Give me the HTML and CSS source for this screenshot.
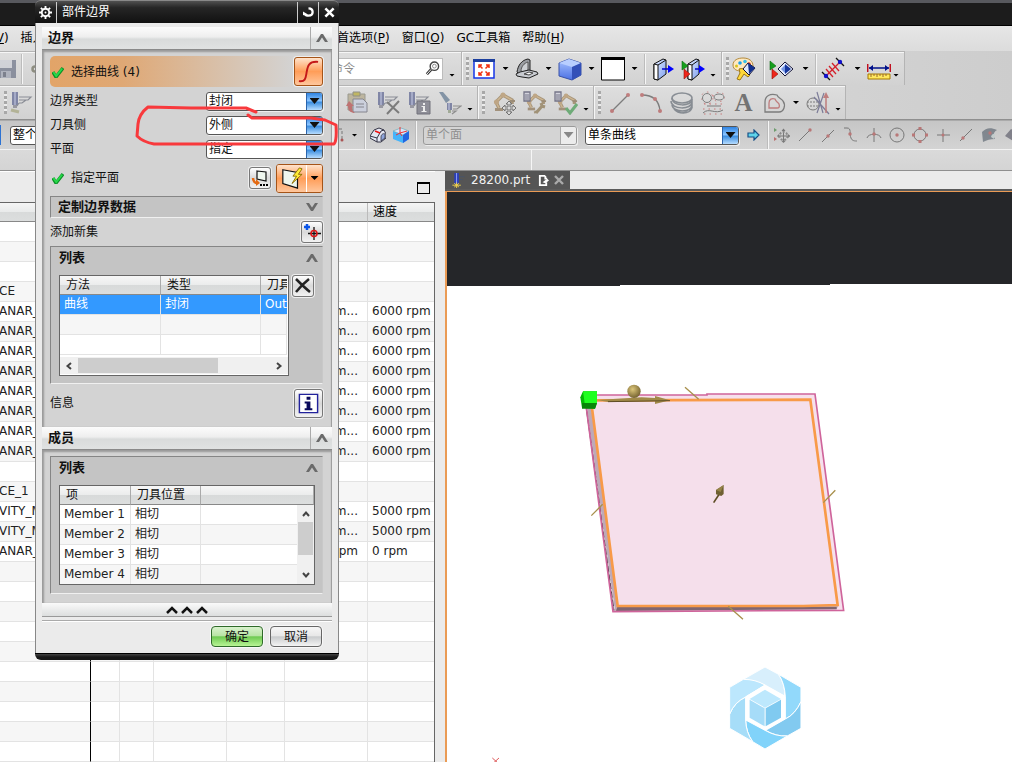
FILE: index.html
```html
<!DOCTYPE html>
<html lang="zh-CN">
<head>
<meta charset="utf-8">
<title>28200.prt</title>
<link rel="stylesheet" href="styles.css">
</head>
<body>
<svg class="defs" aria-hidden="true">
  <defs>
    <radialGradient id="gBall" cx=".4" cy=".35" r=".7"><stop offset="0" stop-color="#dcc67a"/><stop offset="1" stop-color="#6f5d2c"/></radialGradient>
    <linearGradient id="gPane" x1="0" x2="1" y1="0" y2="1"><stop offset="0" stop-color="#e6eeff"/><stop offset="1" stop-color="#7d9ff0"/></linearGradient>
    <linearGradient id="gCube" x1="0" x2="0" y1="0" y2="1"><stop offset="0" stop-color="#a9c4ff"/><stop offset="1" stop-color="#4b70e4"/></linearGradient>
    <symbol id="check" viewBox="0 0 12 12"><path d="M1 6l3 5 7-9" fill="none" stroke="#0a8f26" stroke-width="3.4"/><path d="M1.400 6l2.800 4 6-7.500" fill="none" stroke="#27d84a" stroke-width="2"/></symbol>
    <symbol id="up" viewBox="0 0 12 10"><path d="M0 9L5 1h2l5 8H9L6 4.500 3 9z" fill="#6a6a6a"/></symbol>
    <symbol id="down" viewBox="0 0 12 10"><path d="M0 1l5 8h2l5-8H9L6 5.500 3 1z" fill="#6a6a6a"/></symbol>
    <symbol id="tool" viewBox="0 0 24 24"><path d="M2 1h6v13H2z" fill="#38427c"/><path d="M4 1h2v13H4z" fill="#7a84b8"/><path d="M3 14h4v3H3z" fill="#667"/><path d="M9 6h12l-3 3H9M9 9h7l-4 3H9M9 12l-2 3" fill="none" stroke="#4b5060" stroke-width="1.200"/></symbol>
    <symbol id="robot" viewBox="0 0 24 24"><path d="M3 20h8v-3H3z" fill="#7a5b33"/><path d="M7 17L4 11l7-7 9 5v4" fill="none" stroke="#80602f" stroke-width="3.500"/><path d="M7 17L4 11l7-7 9 5" fill="none" stroke="#c59a59" stroke-width="1.500"/><circle cx="4.500" cy="11" r="2.500" fill="#a97d42"/><circle cx="11" cy="4" r="2.500" fill="#a97d42"/><path d="M18 9h5v2h-5z" fill="#6b4f28"/></symbol>
    <symbol id="sheet" viewBox="0 0 24 24"><path d="M1 1h6v9H1z" fill="#ccd" stroke="#224" stroke-width="1.300"/><path d="M2 4h4M2 6h4M2 8h4" stroke="#224"/></symbol>
    <symbol id="tri" viewBox="0 0 24 24"><path d="M1 4l6 5-6 4z" fill="#16a01c" stroke="#0b6a10" stroke-width=".6"/><path d="M3 12l6 5-6 5z" fill="#f0261a" stroke="#8d120c" stroke-width=".6"/></symbol>
  </defs>
</svg>

<div class="app">
  <header class="titlebar"></header>

  <nav class="menubar">
    <div class="menu-left"><a href="#">(<u>V</u>)</a><a href="#">插入</a></div>
    <a href="#">首选项(<u>P</u>)</a><a href="#">窗口(<u>O</u>)</a><a href="#">GC工具箱</a><a href="#">帮助(<u>H</u>)</a>
  </nav>

  <div class="tools">
    <div class="bar">
      <div class="group">
        <div class="lead lead-a">
          <button class="ic dim" aria-label="保存"><svg viewBox="0 0 24 24"><path d="M2 3h20v18H4l-2-2z" fill="#4d5670"/><path d="M6 3h12v8H6z" fill="#c9ccd6"/><path d="M7 14h10v7H7z" fill="#8f96aa"/><path d="M9 15h3v5H9z" fill="#343b52"/></svg></button>
          <i class="sep"></i>
          <svg class="ic-dot" viewBox="0 0 12 12"><circle cx="7" cy="6" r="2.500" fill="none" stroke="#8d8d80" stroke-width="2.500"/></svg>
        </div>
        <label class="search"><input type="text" placeholder="查找命令" aria-label="查找命令"><svg viewBox="0 0 16 16"><circle cx="10" cy="5.500" r="4.500" fill="#fff" stroke="#444" stroke-width="1.500"/><circle cx="10" cy="5.500" r="2" fill="none" stroke="#888"/><path d="M6.500 9L2 14" stroke="#333" stroke-width="3"/><path d="M6.500 9L2 14" stroke="#fff"/></svg></label>
        <i class="car low wide"></i>
      </div>
      <div class="group">
        <i class="grip"></i>
        <button class="ic" aria-label="适合窗口"><svg viewBox="0 0 24 24"><path d="M2 3h20v18H2z" fill="#fff" stroke="#1636e8" stroke-width="1.500"/><path d="M1 2h22v3H1z" fill="#1c3f9e"/><path d="M7 11V8h3M14 8h3v3M17 15v3h-3M10 18H7v-3M7 8l3.500 3.500M17 8l-3.500 3.500M17 18l-3.500-3.500M7 18l3.500-3.500" stroke="#f03010" stroke-width="1.500" fill="none"/></svg></button><i class="car mid"></i>
        <button class="ic" aria-label="视图方位"><svg viewBox="0 0 24 24"><path d="M2 15C3 8 7 3 13 2l2 1v11L5 18z" fill="#9a9da2" stroke="#222"/><path d="M6 14c0-4 3-8 7-9v8l-5 2z" fill="#cdd0d4" stroke="#555"/><path d="M1 17l4-2 9-2 8 2 1 2-9 4-7-1-5-1z" fill="#c8cbd0" stroke="#222"/><path d="M9 17l5-2 4 1-4 2z" fill="#fff" stroke="#444"/></svg></button><i class="car mid"></i>
        <button class="ic" aria-label="着色"><svg viewBox="0 0 24 24"><path d="M1 6l10-4 12 4v12l-9 5L1 19z" fill="url(#gCube)" stroke="#3a53a8"/><path d="M1 6l10-4 12 4-9 4z" fill="#b8ceff"/><path d="M14 10l9-4v12l-9 5z" fill="#3350b8"/></svg></button><i class="car mid"></i>
        <button class="ic" aria-label="背景"><svg viewBox="0 0 24 24"><path d="M.5 1h23v22H.5z" fill="#fff" stroke="#000"/><path d="M0 0h24v3H0z"/></svg></button><i class="car mid"></i>
        <i class="sep"></i>
        <button class="ic w31" aria-label="剖切"><svg viewBox="0 0 24 24"><path d="M4 7l9-5 3 1v14l-8 6-4-1z" fill="url(#gPane)" stroke="#111"/><path d="M4 7l4 1v15l-4-1z" fill="#fff" stroke="#111"/><path d="M8 8l8-5" stroke="#111"/><path d="M12 12h7" stroke="#00c" stroke-width="1.500"/><path d="M18 8l6 4-6 4z" fill="#00f"/></svg></button>
        <button class="ic w31" aria-label="编辑截面"><svg viewBox="0 0 24 24"><path d="M7 7l8-5 3 1v14l-7 6-4-1z" fill="url(#gPane)" stroke="#111"/><path d="M7 7l4 1v15l-4-1z" fill="#fff" stroke="#111"/><path d="M11 8l7-5" stroke="#111"/><path d="M14 12h5" stroke="#00c" stroke-width="1.500"/><path d="M18 8l6 4-6 4z" fill="#00f"/><use href="#tri"/></svg></button>
        <i class="car low"></i>
      </div>
      <div class="group">
        <i class="grip"></i>
        <button class="ic" aria-label="对象显示"><svg viewBox="0 0 24 24"><path d="M1 8c0-5 5-7 10-7 6 0 10 3 10 8 0 3-4 3-6 3s-3 2-6 2-8-1-8-6z" fill="#ffe9c0" stroke="#b38a3c"/><circle cx="8" cy="6" r="1.800" fill="#19a0ea"/><circle cx="13" cy="4.500" r="1.800" fill="#3bc0e7"/><circle cx="17" cy="7" r="1.800" fill="#ea3014"/><circle cx="4.500" cy="9" r="1.500" fill="#d9c31a"/><path d="M7 12c3-1 5 0 7 1l4 5-2 2-4-3-4 6-3-1 3-6z" fill="#ffd83a" stroke="#9c7612"/><path d="M11 12l5-6 7 5-6 7z" fill="#dfe8ff" stroke="#113"/><path d="M16 6l7 5-6 6z" fill="#12308f"/></svg></button>
        <i class="sep gap"></i>
        <button class="ic w31" aria-label="显示隐藏"><svg viewBox="0 0 24 24"><use href="#tri"/><path d="M9 12l7-7 8 7-8 7z" fill="#e7eeff" stroke="#113"/><path d="M16 7l6 5-6 5z" fill="#16369c"/><path d="M12 12l4-4v8z" fill="#7396e6"/></svg></button><i class="car mid"></i>
        <i class="sep"></i>
        <button class="ic w31" aria-label="测量"><svg viewBox="0 0 24 24"><path d="M1 15l8 8M15 1l8 8" stroke="#111" stroke-width="1.300"/><path d="M5 19L19 5M5 12l7 8M8 9l7 8M11 6l7 8" stroke="#d3202b" stroke-width="1.300"/><circle cx="5" cy="19" r="2.200" fill="#11c"/><circle cx="19" cy="5" r="2.200" fill="#11c"/></svg></button><i class="car mid"></i>
        <button class="ic" aria-label="测量距离"><svg viewBox="0 0 24 24"><path d="M.7 7v8M23.300 7v8" stroke="#c01020" stroke-width="1.500"/><path d="M2 11h20" stroke="#00108a" stroke-width="1.500"/><path d="M6 8l-4 3 4 3zM18 8l4 3-4 3z" fill="#00108a"/><path d="M1 17h22v5H1z" fill="#ffe85e" stroke="#a57900"/><path d="M4 17v3M7 17v2M10 17v3M13 17v2M16 17v3M19 17v2" stroke="#963"/></svg></button>
        <i class="car low"></i>
      </div>
    </div>

    <div class="bar">
      <div class="group">
        <div class="lead lead-b"><i class="grip"></i><button class="ic dim" aria-label="刀具"><svg viewBox="0 0 24 24"><use href="#tool"/><path d="M1 19l8 2" stroke="#996" stroke-width="3"/></svg></button></div>
        <button class="ic w31 dim" aria-label="粘贴"><svg viewBox="0 0 24 24"><path d="M3 3h17v16H3z" fill="#a6986f" stroke="#665"/><path d="M8 1h7v4H8z" fill="#a90" stroke="#554"/><path d="M8 8h10l4 4v9H8z" fill="#c3cbe2" stroke="#445"/><path d="M11 13h8M11 16h8" stroke="#445"/><path d="M4 10L1 15h2c0 5 3 7 7 7-3-2-3-4-3-7h2z" fill="#a22"/></svg></button>
        <button class="ic w31 dim" aria-label="删除"><svg viewBox="0 0 24 24"><use href="#tool"/><path d="M11 11l12 11M23 10L11 23" stroke="#333" stroke-width="2"/></svg></button>
        <button class="ic w31 dim" aria-label="信息"><svg viewBox="0 0 24 24"><use href="#tool"/><path d="M10 10h13v13H10z" fill="#556" stroke="#223"/><path d="M16 12h2v2h-2zM14.500 15H18v5h1.500v1h-5v-1H16v-4h-1.500z" fill="#fff"/></svg></button>
        <button class="ic w31 dim" aria-label="刀轨"><svg viewBox="0 0 24 24"><path d="M1 1h4l7 8-4 3-5-8z" fill="#3c5a7a"/><path d="M9 12h5v7H9z" fill="#38427c"/><path d="M10 12h2v7h-2z" fill="#7a84b8"/><path d="M10 19h3v3h-3z" fill="#786"/><path d="M15 15h8l-4 3h-4M14 20h4l-4 3" fill="none" stroke="#555" stroke-width="1.200"/></svg></button>
        <i class="car low"></i>
      </div>
      <div class="group">
        <i class="grip"></i>
        <button class="ic w31 dim" aria-label="移动机床"><svg viewBox="0 0 24 24"><use href="#robot"/><path d="M17 10l3 3h-2v3h3v-2l3 3-3 3v-2h-3v3h2l-3 3-3-3h2v-3h-3v2l-3-3 3-3v2h3v-3h-2z" fill="#ddd" stroke="#222"/></svg></button>
        <button class="ic w31 dim" aria-label="机床工具"><svg viewBox="0 0 24 24"><g transform="translate(2 1)"><use href="#robot" width="22" height="22"/></g><use href="#sheet"/><path d="M13 22l7-8M18 12l1 3 3 1M13 22l-1-2" fill="none" stroke="#765c2c" stroke-width="3"/></svg></button>
        <button class="ic w31 dim" aria-label="机床检查"><svg viewBox="0 0 24 24"><g transform="translate(2 1)"><use href="#robot" width="22" height="22"/></g><use href="#sheet"/><path d="M12 17l4 5 7-9" fill="none" stroke="#1b8a2d" stroke-width="3"/></svg></button>
        <i class="car low"></i>
      </div>
      <div class="group">
        <i class="grip"></i>
        <button class="ic w31 dim" aria-label="直线"><svg viewBox="0 0 24 24"><path d="M4 20L20 4" stroke="#333" stroke-width="1.300"/><circle cx="4" cy="20" r="2" fill="#a33"/><circle cx="20" cy="4" r="2" fill="#a33"/></svg></button>
        <button class="ic w31 dim" aria-label="圆弧"><svg viewBox="0 0 24 24"><path d="M3 4c10 0 17 5 18 16" fill="none" stroke="#333" stroke-width="1.300"/><circle cx="3" cy="4" r="2" fill="#a33"/><circle cx="16" cy="8" r="2" fill="#a33"/><circle cx="21" cy="20" r="2" fill="#a33"/></svg></button>
        <button class="ic w31 dim" aria-label="螺旋线"><svg viewBox="0 0 24 24"><g fill="none" stroke="#46505c" stroke-width="1.500"><ellipse cx="12" cy="7" rx="10" ry="5"/><path d="M2 7c0 9 20 9 20 1M1 10c0 9 21 9 21 1M2 14c1 8 20 8 20 0M4 18c4 5 15 6 18-1M22 8v9M12 22l6-1"/></g></svg></button>
        <button class="ic w31 dim" aria-label="曲线集"><svg viewBox="0 0 24 24"><g fill="none" stroke="#333"><circle cx="6" cy="7" r="4.500"/><ellipse cx="18" cy="6" rx="5" ry="3"/><path d="M6 15h14M2 22c6-6 12 2 20-3"/></g><g fill="none" stroke="#b33" stroke-dasharray="1.500 4"><circle cx="6" cy="7" r="6"/><ellipse cx="18" cy="6" rx="6" ry="4.500"/><path d="M3 13h20M2 18h20M3 23h20"/></g></svg></button>
        <button class="ic w31 dim letter" aria-label="文本">A</button>
        <button class="ic w31 dim" aria-label="偏置"><svg viewBox="0 0 24 24"><path d="M2 21V11c0-6 5-9 12-7 1 3 4 3 6 6 3 4 1 11-4 11z" fill="none" stroke="#333" stroke-width="1.300"/><path d="M6 17v-5c0-4 3-5 6-4 1 3 3 3 4 5 1 3 0 4-2 4z" fill="none" stroke="#a33" stroke-width="1.300"/></svg></button><i class="car thin"></i>
        <button class="ic w31 dim" aria-label="相交"><svg viewBox="0 0 24 24"><circle cx="7" cy="13" r="6" fill="none" stroke="#333"/><path d="M1 11h12M1 15h12" stroke="#333" stroke-dasharray="2 1"/><path d="M11 1l6 21M18 2l-7 20M8 6l15 17" stroke="#336" stroke-width="1.200"/><path d="M20 22V6" stroke="#a33" stroke-width="1.500"/><path d="M17 7l3-6 3 6z" fill="#a33"/></svg></button>
        <i class="car low"></i>
      </div>
    </div>
  </div>

  <div class="selbar">
    <div class="lead lead-c">
      <i class="stub"></i>
      <span class="combo scope"><select aria-label="选择范围"><option>整个装配</option></select></span>
      <svg class="marquee" viewBox="0 0 12 16"><path d="M1 2h8v10M1 12h3" fill="none" stroke="#777" stroke-dasharray="3 2"/><circle cx="9" cy="13" r="1.500" fill="#a55"/></svg>
    </div>
    <i class="car mid"></i><i class="sep"></i>
    <button class="ic s23" aria-label="面选择"><svg viewBox="0 0 16 16"><path d="M0 9l4-6 5-2 5 2 2 4v4l-5 4H7l-7-4z" fill="#e4e7f2" stroke="#334"/><path d="M0 9l7 2 4-7 3-1M7 11v4" fill="none" stroke="#334"/><path d="M11 14v-4c0-3 3-4 4-3v4z" fill="#8fa6dc" stroke="#334" stroke-width=".8"/><path d="M5 4l5 2" stroke="#e11" stroke-width="1.600"/></svg></button>
    <button class="ic s23" aria-label="体选择"><svg viewBox="0 0 16 16"><path d="M0 4l8-3 8 3v8l-6 4-10-4z" fill="#45b4fb"/><path d="M0 4l8-3 8 3-6 4z" fill="#d8e6fa" stroke="#7aa" stroke-width=".6"/><path d="M10 8l6-4v8l-6 4z" fill="#2465e0"/><path d="M7 0v6l-4 2M7 6l7-2M7 6l2 3" stroke="#e33" fill="none"/></svg></button>
    <i class="sep near"></i>
    <span class="combo off"><select disabled aria-label="面规则"><option>单个面</option></select><b></b></span>
    <span class="combo"><select aria-label="曲线规则"><option>单条曲线</option></select><b></b></span>
    <button class="ic next" aria-label="下一个"><svg class="small" viewBox="0 0 14 12"><path d="M1 4h6V1l5 5-5 5V8H1z" fill="#5fd4ea" stroke="#174f86" stroke-width="1.200"/></svg></button>
    <i class="sep"></i>
    <div class="snaps">
      <button class="ic s23 dim" aria-label="启用捕捉"><svg viewBox="0 0 16 16"><path d="M0 1l3 2-3 2z" fill="#272"/><path d="M0 10l3 2-3 2z" fill="#a22"/><path d="M9.500 3v12M4 9h12" stroke="#333"/><path d="M7.500 4l2-2.500 2 2.500zM7.500 14l2 2 2-2zM14 7l2 2-2 2zM5 7L3 9l2 2z" fill="#333"/><circle cx="9.500" cy="9" r="4" fill="none" stroke="#555" stroke-width="2" stroke-dasharray="2 1.500"/></svg></button>
      <button class="ic s23 dim" aria-label="终点"><svg viewBox="0 0 16 16"><path d="M2 14L13 3" stroke="#333"/><circle cx="13" cy="3" r="1.700" fill="#a33"/></svg></button>
      <button class="ic s23 dim" aria-label="中点"><svg viewBox="0 0 16 16"><path d="M2 15L14 3" stroke="#333"/><circle cx="8" cy="9" r="1.700" fill="#a33"/></svg></button>
      <button class="ic s23 dim" aria-label="控制点"><svg viewBox="0 0 16 16"><path d="M1 1h3c5 0 2 6 4 10 1 3 4 3 6 3" fill="none" stroke="#333"/><circle cx="7" cy="7" r="1.700" fill="#a33"/></svg></button>
      <button class="ic s23 dim" aria-label="交点"><svg viewBox="0 0 16 16"><path d="M1 11c1-5 13-5 14 0M8 1v14" fill="none" stroke="#333"/><circle cx="8" cy="7" r="1.700" fill="#a33"/></svg></button>
      <button class="ic s23 dim" aria-label="圆心"><svg viewBox="0 0 16 16"><circle cx="8" cy="8" r="7" fill="none" stroke="#333"/><circle cx="8" cy="8" r="1.700" fill="#a33"/></svg></button>
      <button class="ic s23 dim" aria-label="象限点"><svg viewBox="0 0 16 16"><circle cx="8" cy="8" r="6" fill="none" stroke="#333"/><path d="M8 0v3M8 13v3M0 8h3M13 8h3" stroke="#a33" stroke-width="3"/></svg></button>
      <button class="ic s23 dim" aria-label="现有点"><svg viewBox="0 0 16 16"><path d="M8 2v13M2 8h13" stroke="#333"/><circle cx="8" cy="8" r="1.500" fill="#a33"/></svg></button>
      <button class="ic s23 dim" aria-label="曲线上的点"><svg viewBox="0 0 16 16"><path d="M2 14L14 2" stroke="#333"/><circle cx="5" cy="11" r="1.700" fill="#a33"/></svg></button>
      <button class="ic s23 dim" aria-label="面上的点"><svg viewBox="0 0 16 16"><path d="M1 5c4-4 8-5 15-2-4 2-4 6-2 9-5 0-8 1-12 3z" fill="#44505e"/><path d="M10 10c0-3 4-4 4-3l-1 5z" fill="#bcc"/><circle cx="9" cy="6" r="1.700" fill="#a33"/></svg></button>
      <button class="ic s23 dim" aria-label="小平面"><svg viewBox="0 0 16 16"><path d="M1 9l6-7 8 4-4 9z" fill="#445"/></svg></button>
    </div>
  </div>
  <div class="cuebar"><span></span><span></span></div>

  <main class="work">
    <section class="nav">
      <div class="nav-top"><button class="max" aria-label="最大化"></button></div>
      <div class="nav-table">
        <table>
          <colgroup><col class="c-name"><col class="c-a"><col class="c-b"><col class="c-c"><col class="c-d"><col class="c-feed"><col class="c-speed"></colgroup>
          <thead><tr><th></th><th></th><th></th><th></th><th></th><th></th><th>速度</th></tr></thead>
          <tbody>
            <tr><td></td><td></td><td></td><td></td><td></td><td></td><td></td></tr>
            <tr><td></td><td></td><td></td><td></td><td></td><td></td><td></td></tr>
            <tr><td></td><td></td><td></td><td></td><td></td><td></td><td></td></tr>
            <tr><td>CE</td><td></td><td></td><td></td><td></td><td></td><td></td></tr>
            <tr><td>ANAR_</td><td></td><td></td><td></td><td></td><td>m...</td><td>6000 rpm</td></tr>
            <tr><td>ANAR_</td><td></td><td></td><td></td><td></td><td>m...</td><td>6000 rpm</td></tr>
            <tr><td>ANAR_</td><td></td><td></td><td></td><td></td><td>m...</td><td>6000 rpm</td></tr>
            <tr><td>ANAR_</td><td></td><td></td><td></td><td></td><td>m...</td><td>6000 rpm</td></tr>
            <tr><td>ANAR_</td><td></td><td></td><td></td><td></td><td>m...</td><td>6000 rpm</td></tr>
            <tr><td>ANAR_</td><td></td><td></td><td></td><td></td><td>m...</td><td>6000 rpm</td></tr>
            <tr><td>ANAR_</td><td></td><td></td><td></td><td></td><td>m...</td><td>6000 rpm</td></tr>
            <tr><td>ANAR_</td><td></td><td></td><td></td><td></td><td>m...</td><td>6000 rpm</td></tr>
            <tr><td></td><td></td><td></td><td></td><td></td><td></td><td></td></tr>
            <tr><td>CE_1</td><td></td><td></td><td></td><td></td><td></td><td></td></tr>
            <tr><td>VITY_M</td><td></td><td></td><td></td><td></td><td>m...</td><td>5000 rpm</td></tr>
            <tr><td>VITY_M</td><td></td><td></td><td></td><td></td><td>m...</td><td>5000 rpm</td></tr>
            <tr><td>ANAR_</td><td></td><td></td><td></td><td></td><td>pm</td><td>0 rpm</td></tr>
            <tr><td></td><td></td><td></td><td></td><td></td><td></td><td></td></tr>
            <tr><td></td><td></td><td></td><td></td><td></td><td></td><td></td></tr>
            <tr><td></td><td></td><td></td><td></td><td></td><td></td><td></td></tr>
            <tr><td></td><td></td><td></td><td></td><td></td><td></td><td></td></tr>
            <tr><td></td><td></td><td></td><td></td><td></td><td></td><td></td></tr>
            <tr><td></td><td></td><td></td><td></td><td></td><td></td><td></td></tr>
            <tr><td></td><td></td><td></td><td></td><td></td><td></td><td></td></tr>
            <tr><td></td><td></td><td></td><td></td><td></td><td></td><td></td></tr>
            <tr><td></td><td></td><td></td><td></td><td></td><td></td><td></td></tr>
            <tr><td></td><td></td><td></td><td></td><td></td><td></td><td></td></tr>
          </tbody>
        </table>
      </div>
    </section>

    <section class="stage">
      <div class="tabs">
        <div class="tab">
          <svg class="t-tool" viewBox="0 0 14 16"><path d="M3 0h5v12H3z" fill="#2c3fb8"/><path d="M5 0h1v12H5z" fill="#93a4ff"/><path d="M9 4h5M9 7h3" stroke="#48546a"/><path d="M1 13h9M5.500 10v6M3 11l5 4M8 11l-5 4" stroke="#f3d34a"/></svg>
          <span>28200.prt</span>
          <svg class="t-mod" viewBox="0 0 12 12"><path d="M8 1H2v10h7V8M8 1v3h2" fill="none" stroke="#fff" stroke-width="2"/><path d="M5 8l5-4 2 2-4 3z" fill="#fff"/></svg>
          <button class="t-x" aria-label="关闭"><svg viewBox="0 0 10 10"><path d="M1 1l8 8M9 1L1 9" stroke="#aaa" stroke-width="2.400"/></svg></button>
        </div>
      </div>
      <div class="viewport">
        <svg class="scene" role="img" aria-label="零件">
          <g transform="translate(-447 -192)">
            <path d="M447 192H3000V284H830V285H620V286H447z" fill="#252629"/>
            <g transform="translate(560 370) scale(.3333)">
              <path d="M74 75H441V72H765L851 721 159 725z" fill="#f6e0ec"/>
              <path d="M78 112L96 112 172 709 835 706 830 718 165 722z" fill="#bda9b8"/>
              <path d="M92 100L752 89 833 706 172 709z" fill="#f5dfeb"/>
              <path d="M172 711H830V718L168 723z" fill="#7f6670"/>
              <path d="M79 116L162 722" stroke="#3f323a" stroke-width="3"/>
              <path d="M80 116L163 722" stroke="#fff" stroke-width="2" stroke-dasharray="8 18"/>
              <path d="M74 75H441V72H765L851 721 159 725z" fill="none" stroke="#cf649b" stroke-width="5"/>
              <path d="M93 91L751 89 833 705 730 708H173z" fill="none" stroke="#f89a48" stroke-width="8"/>
              <path d="M375 52L416 88M826 361L790 398M94 437L128 403M505 709L549 748" stroke="#a8904c" stroke-width="4"/>
              <path d="M110 90L245 82 285 84V78L330 91 285 102V94L145 96z" fill="#a18a48"/>
              <path d="M144 95L330 92" stroke="#5e4d25" stroke-width="3"/>
              <circle cx="222" cy="64" r="20" fill="url(#gBall)"/>
              <path d="M461 398L478 372" stroke="#5e4d25" stroke-width="5"/><path d="M468 360L491 345V372L484 378 468 373z" fill="#6f6032"/><path d="M468 360L491 345 482 366z" fill="#958347"/>
              <path d="M69 64H111V99L105 116 66 113 61 82z" fill="#05b905"/><path d="M69 64H111V99H74z" fill="#1fff1f"/><path d="M66 99H111L105 116H66z" fill="#078707"/>
            </g>
            <g transform="translate(480 650) scale(.3333)">
              <g stroke="#fff" stroke-width="3">
                <path d="M790 88L855 51 896 73Q916 103 914 138L855 105Q822 88 790 88z" fill="#d8effc"/>
                <path d="M896 73L963 112V155Q946 193 916 207V139Q914 100 896 73z" fill="#92d9fb"/>
                <path d="M963 155V235L922 258Q888 260 857 241L916 207Q946 193 963 155z" fill="#82caf0"/>
                <path d="M922 258L855 297 818 275Q798 247 797 210L855 241Q888 260 922 258z" fill="#81d3fa"/>
                <path d="M818 275L749 235V192Q764 156 797 141V210Q798 247 818 275z" fill="#a6ddf8"/>
                <path d="M749 192V112L790 88Q826 88 855 105L797 141Q764 156 749 192z" fill="#bce7fd"/>
              </g>
              <path d="M855 105L916 139V207L855 241 797 207V139z" fill="#fff"/>
              <path d="M855 119L903 147 855 173 809 147z" fill="#bde8fd"/><path d="M809 149L854 175V229L809 203z" fill="#a6dcf8"/><path d="M903 149L857 175V229L903 203z" fill="#80caf0"/>
              <path d="M37 324L57 342M57 324L37 342" stroke="#d55" stroke-width="3"/>
            </g>
          </g>
        </svg>
      </div>
    </section>
  </main>
</div>

<div class="dialog" role="dialog" aria-label="部件边界">
  <div class="d-title">
    <button class="d-gear" aria-label="选项"><svg viewBox="0 0 14 14"><circle cx="7" cy="7" r="4" fill="none" stroke="#fff" stroke-width="2"/><path d="M7 0v3M7 11v3M0 7h3M11 7h3M2 2l2 2M10 10l2 2M12 2l-2 2M2 12l2-2" stroke="#fff" stroke-width="2"/><circle cx="7" cy="7" r="1" fill="#fff"/></svg></button>
    <h1>部件边界</h1>
    <button class="d-btn" aria-label="重置"><svg viewBox="0 0 12 12"><path d="M6 1.500c6 0 6 8 0 8-2 0-4-1-4-2" fill="none" stroke="#fff" stroke-width="2.500"/><path d="M0 9V5l5 3z" fill="#fff"/></svg></button>
    <button class="d-btn" aria-label="关闭"><svg viewBox="0 0 12 12"><path d="M1.500 1.500l9 9M10.500 1.500l-9 9" stroke="#fff" stroke-width="2.800"/></svg></button>
  </div>
  <div class="d-body">
    <div class="sec-head"><h2>边界</h2><button aria-label="折叠"><svg><use href="#up"/></svg></button></div>
    <div class="sec">
      <div class="pick"><div class="pick-l"><svg class="ck"><use href="#check"/></svg>选择曲线 (4)</div>
        <button class="sq big hot" aria-label="曲线"><svg viewBox="0 0 24 24"><path d="M2 22c7 1 7-3 8-9S12 1 22 2" fill="none" stroke="#c41818" stroke-width="2"/></svg></button></div>
      <div class="row"><label for="bt">边界类型</label><span class="combo"><select id="bt"><option>封闭</option></select><b></b></span></div>
      <div class="row"><label for="ts">刀具侧</label><span class="combo"><select id="ts"><option>外侧</option></select><b></b></span></div>
      <div class="row"><label for="pl">平面</label><span class="combo"><select id="pl"><option>指定</option></select><b></b></span></div>
      <div class="plane"><svg class="ck"><use href="#check"/></svg><span class="grow">指定平面</span>
        <button class="sq" aria-label="平面对话框"><svg viewBox="0 0 18 18"><path d="M6 2l9 1v9l-9-2z" fill="#eef6ee" stroke="#111" stroke-width="1.200"/><path d="M9 15h2v2H9zM12 15h2v2h-2zM15 15h2v2h-2z"/><path d="M2 9c0 3 2 5 4 5" fill="none" stroke="#e46a12" stroke-width="2.500"/><path d="M5 10l4 4-4 3z" fill="#e46a12"/></svg></button>
        <span class="split"><button class="hot" aria-label="自动判断"><svg viewBox="0 0 24 24"><path d="M2 3l16 3v17L2 18z" fill="#eef6ee" stroke="#111" stroke-width="1.300"/><path d="M20 1l-7 9h4l-5 8L23 8h-4l4-6z" fill="#ffec35" stroke="#8a6a00"/></svg></button><button class="hot arrow" aria-label="更多"><i class="car"></i></button></span></div>
      <div class="fold"><h3>定制边界数据</h3><svg><use href="#down"/></svg></div>
      <div class="line"><span class="grow">添加新集</span><button class="sq" aria-label="添加新集"><svg viewBox="0 0 18 18"><path d="M4 1v6M1 4h6" stroke="#0a55e8" stroke-width="2.500"/><path d="M11 4v13M5 10.500h13" stroke="#111" stroke-width="1.300"/><circle cx="11" cy="10.500" r="3" fill="none" stroke="#e01818" stroke-width="1.600"/></svg></button></div>
      <div class="box">
        <div class="box-head"><h3>列表</h3><svg><use href="#up"/></svg></div>
        <div class="list-row">
          <div class="list list-a">
            <div class="clip"><table>
              <thead><tr><th>方法</th><th>类型</th><th class="cut">刀具侧</th></tr></thead>
              <tbody><tr class="on"><td>曲线</td><td>封闭</td><td class="cut">Outside</td></tr><tr><td></td><td></td><td></td></tr><tr><td></td><td></td><td></td></tr></tbody>
            </table></div>
            <div class="hbar"><svg viewBox="0 0 8 8"><path d="M6 1L2.500 4 6 7" fill="none" stroke="#444" stroke-width="2"/></svg><i></i><svg viewBox="0 0 8 8"><path d="M2 1l3.500 3L2 7" fill="none" stroke="#444" stroke-width="2"/></svg></div>
          </div>
          <button class="sq" aria-label="移除"><svg viewBox="0 0 18 18"><path d="M2 2c5 5 9 9 14 13M15 2C10 6 6 10 2 15" stroke="#222" stroke-width="2.500" fill="none"/></svg></button>
        </div>
      </div>
      <div class="line tall"><span class="grow">信息</span><button class="sq big" aria-label="信息"><svg viewBox="0 0 24 24"><path d="M2.500 2.500h19v19h-19z" fill="#fff" stroke="#22229c" stroke-width="1.500"/><path d="M10 5h4v3h-4zM8 10h6v7h2v2H8v-2h2v-5H8z" fill="#0a0a5c"/></svg></button></div>
    </div>
    <div class="sec-head"><h2>成员</h2><button aria-label="折叠"><svg><use href="#up"/></svg></button></div>
    <div class="sec sec-b">
      <div class="box">
        <div class="box-head"><h3>列表</h3><svg><use href="#up"/></svg></div>
        <div class="list list-b">
          <table>
            <colgroup><col class="m-a"><col class="m-b"><col></colgroup>
            <thead><tr><th>项</th><th>刀具位置</th><th></th></tr></thead>
            <tbody><tr><td>Member 1</td><td>相切</td><td></td></tr><tr><td>Member 2</td><td>相切</td><td></td></tr><tr><td>Member 3</td><td>相切</td><td></td></tr><tr><td>Member 4</td><td>相切</td><td></td></tr></tbody>
          </table>
          <div class="vbar"><svg viewBox="0 0 8 8"><path d="M1 6l3-3.500L7 6" fill="none" stroke="#444" stroke-width="2"/></svg><i></i><svg viewBox="0 0 8 8"><path d="M1 2l3 3.500L7 2" fill="none" stroke="#444" stroke-width="2"/></svg></div>
        </div>
      </div>
    </div>
    <button class="more" aria-label="收起"><svg viewBox="0 0 42 8"><path d="M1 7l5-5 5 5M16 7l5-5 5 5M31 7l5-5 5 5" fill="none" stroke="#111" stroke-width="2.500"/></svg></button>
    <div class="actions"><button class="btn ok">确定</button><button class="btn">取消</button></div>
  </div>
  <div class="d-foot"></div>
</div>

<svg class="markup" viewBox="0 0 210 50" aria-hidden="true"><path d="M125 10L115 6H60L17 5Q8 12 7 22L6 34Q12 40 23 42H203Q206 39 205 23L194 18 180 16H121L117 13" fill="none" stroke="#f8393c" stroke-width="3" stroke-linecap="round" stroke-linejoin="round"/></svg>
</body>
</html>
```

FILE: styles.css
```css
* { box-sizing: border-box; }
body { margin: 0; height: 100vh; overflow: hidden; position: relative; background: #ebebeb; color: #000; font: 12px/18px "DejaVu Sans", "Noto Sans CJK SC", sans-serif; }
button { border: 0; padding: 0; margin: 0; background: none; color: inherit; font: inherit; }
input, select { font: inherit; color: inherit; margin: 0; }
h1, h2, h3 { margin: 0; font: inherit; }
table { border-collapse: separate; border-spacing: 0; table-layout: fixed; width: 100%; }
th, td { padding: 0 4px; font-weight: normal; text-align: left; white-space: nowrap; }
a { color: inherit; text-decoration: none; }
svg { display: block; flex: none; }
.defs { position: absolute; width: 0; height: 0; }
.grow { flex: 1; }

.app { display: flex; flex-direction: column; height: 100%; }
.titlebar { flex: none; height: 26px; background: #1c1c1c; border-top: 3px solid #58595e; border-bottom: 1px solid #000; }
.menubar { flex: none; display: flex; align-items: center; gap: 12px; height: 25px; padding-bottom: 2px; background: linear-gradient(#e6e6e6, #dcdcdc); white-space: nowrap; }
.menubar .menu-left { display: flex; gap: 12px; width: 325px; margin-left: -9px; margin-right: 9px; }

.tools { flex: none; background: linear-gradient(90deg, #d9d9d9, #dadada 60%, #cdcdcd); border-bottom: 1px solid #8f8f8f; }
.bar { display: flex; height: 34px; }
.group { display: flex; align-items: center; border: 1px solid #b4b4b4; border-width: 1px 1px 0 0; padding-right: 3px; box-shadow: inset 0 1px #f6f6f6; background: linear-gradient(#dedede, #d2d2d2); }
.group:first-child { padding-right: 0; }
.group + .group { box-shadow: inset 1px 1px #f6f6f6; }
.bar + .bar .group { padding-right: 2px; }
.lead { display: flex; align-items: center; overflow: hidden; flex: none; }
.lead-a { width: 300px; }
.lead-a .ic { width: 20px; margin-left: -6px; }
.lead-a .sep { margin: 0 5px 0 7px; }
.ic-dot { width: 12px; height: 12px; }
.lead-b { width: 341px; }
.lead-c { width: 345px; }
.ic { width: 24px; height: 26px; display: grid; place-items: center; flex: none; }
.ic svg { width: 24px; height: 24px; }
.w31 { width: 31px; }
.next { width: 26px; }
.s23 { width: 23px; }
.s23 svg { width: 16px; height: 16px; }
.ic svg.small { width: 14px; height: 12px; }
.dim { opacity: .55; }
.letter { font: bold 25px/26px "Liberation Serif", serif; color: #222; }
.grip { width: 10px; height: 23px; flex: none; background: repeating-linear-gradient(#a8a8a8 0 3px, #ececec 3px 5px) 4px 0 / 3px 100% no-repeat; }
.sep { width: 2px; height: 30px; flex: none; background: #f6f6f6; border-left: 1px solid #bcbcbc; }
.sep.gap { margin-left: 7px; }
.car { width: 10px; height: 4px; flex: none; display: grid; place-items: center; }
.car::before { content: ""; width: 6px; height: 3px; background: #000; clip-path: polygon(0 0, 100% 0, 50% 100%); }
.car.mid { width: 19px; }
.car.low { margin-top: 13px; }
.car.wide { width: 18px; }
.car.thin { width: 12px; }
.search { display: flex; align-items: center; width: 143px; height: 22px; background: #fff; border: 1px solid #bcbcbc; padding-right: 2px; }
.search input { flex: 1; min-width: 0; border: 0; padding: 0 6px; background: none; outline: 0; }
.search input::placeholder { color: #8a8a8a; }
.search svg { width: 15px; height: 15px; }

.selbar { flex: none; display: flex; align-items: center; height: 29px; overflow: hidden; border-top: 1px solid #aaa; background: linear-gradient(#c6c6c6, #d4d4d4); }
.selbar > .combo { margin-right: 8px; width: 154px; }
.selbar > .combo + .ic { margin-left: -6px; }
.stub { width: 2px; height: 20px; background: #2d72d2; margin-right: 9px; }
.scope { width: 320px; }
.marquee { width: 12px; height: 16px; margin-left: 3px; }
.sep.near { margin: 0 6px 0 3px; }
.snaps { display: flex; margin-left: 1px; }
.cuebar { flex: none; display: flex; height: 22px; border-top: 1px solid #f2f2f2; border-bottom: 1px solid #8f8f8f; background: linear-gradient(#dadada, #d4d4d4); }
.cuebar span:first-child { width: 532px; border-right: 1px solid #f6f6f6; }

.combo { display: grid; height: 19px; flex: none; border: 1px solid #555; border-radius: 3px; background: #fff; overflow: hidden; box-shadow: 1px 1px #eee; }
.combo select { grid-area: 1 / 1; appearance: none; width: 100%; height: 17px; border: 0; padding: 0 20px 0 2px; background: none; line-height: 17px; outline: 0; opacity: 1; }
.combo b { grid-area: 1 / 1; justify-self: end; width: 16px; height: 17px; pointer-events: none; display: grid; place-items: center; border-left: 1px solid #2a64ad; background: linear-gradient(#2f84e2, #8ac4ff 45%, #3e8fe0 55%, #b6dcff); }
.combo b::before { content: ""; width: 10px; height: 6px; background: #111; clip-path: polygon(0 0, 100% 0, 50% 100%); }
.combo.off { background: #d4d4d4; border-color: #999; }
.combo.off select { color: #8f8f8f; }
.combo.off b { background: #ececec; border-color: #aaa; }
.combo.off b::before { background: #888; }

.work { flex: 1; min-height: 0; display: grid; grid-template-columns: 445px 1fr; }
.nav { display: flex; flex-direction: column; min-height: 0; overflow: hidden; padding-right: 10px; background: #ebebeb; }
.nav-top { flex: none; display: flex; justify-content: flex-end; height: 31px; padding: 10px 5px 0 0; border-top: 1px solid #fff; }
.max { width: 13px; height: 12px; border: 1px solid #000; border-top-width: 2px; }
.nav-table { flex: 1; min-height: 0; overflow: hidden; border: solid #666; border-width: 1px 1px 0 0; background: #fff; color: #222; }
.nav-table th { height: 19px; padding-top: 1px; line-height: 17px; background: linear-gradient(#f5f5f5, #e8eaea 50%, #d8dada 51%, #dcdede); border-bottom: 1px solid #888; border-right: 1px solid #bbb; color: #000; }
.nav-table th:last-child { padding-left: 5px; }
.nav-table td { height: 20px; line-height: 19px; border-bottom: 1px solid #e3e3e3; border-right: 1px solid #e3e3e3; }
.nav-table tr:nth-child(even) td { background: #f6f6f6; }
.nav-table td:first-child { padding-left: 0; border-right-color: #000; text-indent: -1px; }
.nav-table td:nth-child(6) { text-align: right; padding-right: 9px; }
.nav-table th:last-child, .nav-table td:last-child { border-right: 0; }
.nav-table td:last-child { padding-right: 0; }
.c-name { width: 91px; }
.c-a { width: 29px; }
.c-b { width: 34px; }
.c-c { width: 73px; }
.c-d { width: 58px; }
.c-feed { width: 83px; }

.stage { display: flex; flex-direction: column; min-width: 0; }
.tabs { flex: none; height: 20px; border-bottom: 2px solid #5b5b5b; background: #ebebeb; display: flex; }
.tab { display: flex; align-items: center; padding: 0 6px; background: #555; color: #f2f2f2; }
.t-tool { width: 14px; height: 15px; margin-right: 6px; }
.t-mod { width: 11px; height: 11px; margin: 0 5px 0 8px; }
.t-x svg { width: 10px; height: 10px; }
.viewport { flex: 1; min-height: 0; border: solid #ea9b55; border-width: 1px 0 0 2px; background: #fff; overflow: hidden; }
.scene { width: 100%; height: 100%; }

.dialog { position: absolute; left: 35px; top: 0; width: 304px; color: #111; }
.d-title { display: flex; align-items: center; height: 23px; border-top: 1px solid #888; border-radius: 6px 6px 0 0; background: linear-gradient(#505050, #262626 30%, #111); color: #fff; }
.d-gear { width: 22px; height: 21px; display: grid; place-items: center; border-right: 1px solid #ccc; }
.d-gear svg { width: 13px; height: 13px; }
.d-title h1 { flex: 1; padding-left: 5px; }
.d-btn { width: 21px; height: 21px; display: grid; place-items: center; border-left: 1px solid #ccc; }
.d-btn svg { width: 11px; height: 11px; }
.d-body { background: #ebebeb; border: solid #888; border-width: 0 1px; padding: 4px 6px 0; }
.sec-head { display: flex; align-items: center; height: 23px; padding-left: 6px; border-bottom: 1px solid #8a8a8a; background: linear-gradient(#fcfcfc, #eee 45%, #d9dbdb 55%, #e0e2e2); }
.sec-head h2 { flex: 1; font-size: 13px; font-weight: bold; }
.sec-head button { width: 22px; height: 22px; display: grid; place-items: center; border-left: 1px solid #aaa; }
.sec-head svg, .fold svg, .box-head svg { width: 12px; height: 10px; }
.sec { padding: 6px 9px 11px 8px; background: #d3d3d3; box-shadow: inset 2px 2px 2px #999, inset -1px 0 1px #999; }
.ck { width: 12px; height: 12px; margin: 0 7px 0 2px; }
.pick { display: flex; align-items: center; height: 31px; margin-bottom: 2px; }
.pick-l { flex: 1; display: flex; align-items: center; height: 31px; border-radius: 5px 0 0 5px; background: linear-gradient(90deg, #e2a468, #dfa875 30%, #d3d3d3); }
.row { display: flex; align-items: center; justify-content: space-between; height: 24px; }
.row .combo { width: 117px; }
.sq { width: 22px; height: 22px; display: grid; place-items: center; flex: none; border: 1px solid #777; border-radius: 3px; background: linear-gradient(#fff, #d9d9d9 50%, #f2f2f2); box-shadow: 0 0 0 1px #eee; }
.sq svg { width: 18px; height: 18px; }
.sq.big { width: 29px; height: 29px; }
.sq.big svg { width: 23px; height: 23px; }
.sq.hot, .hot { background: linear-gradient(#ffe3cc, #ff9d58 50%, #ffc79d); border-color: #a55418; }
.plane { display: flex; align-items: center; height: 34px; margin-bottom: 1px; }
.plane .sq { margin-right: 5px; }
.split { display: flex; height: 29px; border: 1px solid #a55418; border-radius: 3px; overflow: hidden; }
.split button { width: 29px; display: grid; place-items: center; }
.split svg { width: 22px; height: 22px; }
.split .arrow { width: 16px; border-left: 1px solid #fff; }
.arrow .car::before { width: 8px; height: 4px; }
.fold, .box { border: 1px solid #8b8b8b; border-color: #858585 #c8c8c8 #f0f0f0 #858585; background: #c4c4c4; }
.fold { display: flex; align-items: center; justify-content: space-between; height: 22px; padding: 0 4px 0 7px; }
.fold h3, .box-head h3 { font-size: 13px; font-weight: bold; }
.line { display: flex; align-items: center; height: 28px; }
.line.tall { height: 38px; margin-bottom: -6px; }
.box { padding: 0 8px 7px; }
.box-head { display: flex; align-items: center; justify-content: space-between; height: 28px; padding-bottom: 6px; margin-right: -4px; }
.list-row { display: flex; gap: 3px; align-items: flex-start; }
.list { border: 1px solid #666; background: #fff; overflow: hidden; }
.list-a { width: 230px; height: 101px; }
.clip { overflow: hidden; height: 80px; border-right: 1px solid #fff; }
.list-a th:first-child { width: 101px; }
.list-a th:nth-child(2) { width: 100px; }
.list th { height: 19px; line-height: 18px; padding-left: 6px; background: linear-gradient(#f7f7f7, #ebecec 50%, #d8dada 51%, #dcdede); border-right: 1px solid #aaa; border-bottom: 1px solid #888; }
.list td { height: 20px; line-height: 19px; border-right: 1px solid #e3e3e3; border-bottom: 1px solid #e3e3e3; color: #222; }
.list th.cut, .list td.cut { overflow: hidden; text-overflow: clip; padding-right: 0; border-right: 0; }
.list .on td { background: #3399ff; color: #fff; }
.list-a tr:nth-child(2) td, .list-b tbody tr:nth-child(even) td { background: #f6f6f6; }
.hbar { display: flex; align-items: center; height: 17px; margin-top: 1px; padding: 0 5px; background: #f0f0f0; }
.hbar svg, .vbar svg { width: 8px; height: 8px; }
.hbar i { width: 140px; height: 15px; background: #cdcdcd; margin: 0 auto 0 5px; }
.list-b { width: 256px; height: 100px; display: grid; grid-template-columns: 1fr; margin-bottom: 1px; }
.list-b table, .vbar { grid-area: 1 / 1; }
.m-a { width: 71px; }
.m-b { width: 70px; }
.vbar { justify-self: end; width: 17px; margin-top: 19px; height: 79px; padding: 5px 0; display: flex; flex-direction: column; align-items: center; background: #f0f0f0; }
.vbar i { width: 15px; height: 33px; background: #cdcdcd; margin: 4px 0 auto; }
.sec-b { padding-bottom: 9px; }
.more { display: grid; place-items: center; width: 100%; height: 14px; background: linear-gradient(#fafafa, #dcdede); border-bottom: 1px solid #999; }
.more svg { width: 42px; height: 8px; }
.actions { display: flex; justify-content: flex-end; gap: 7px; margin-top: 3px; padding: 5px 10px 6px; border-top: 1px solid #aaa; box-shadow: inset 0 1px #fff; }
.btn { width: 52px; height: 21px; border: 1px solid #666; border-radius: 4px; background: linear-gradient(#f6f6f6, #e8e8e8 45%, #c9cbcd 52%, #f4f4f4); line-height: 18px; box-shadow: 0 0 0 1px #f8f8f8; }
.btn.ok { background: linear-gradient(#d9f2cd, #b9e4a6 45%, #6fca52 52%, #b8f595); border-color: #2f6a2a; }
.d-foot { height: 7px; background: linear-gradient(#444, #181818 50%); border-top: 1px solid #000; border-radius: 0 0 6px 6px; }
.markup { position: absolute; left: 131px; top: 102px; width: 210px; height: 50px; pointer-events: none; }
```
